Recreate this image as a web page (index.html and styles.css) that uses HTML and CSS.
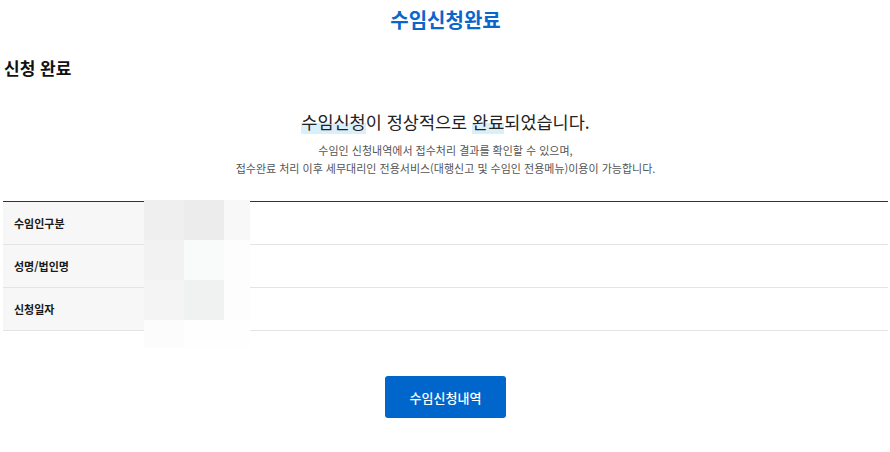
FILE: index.html
```html
<!DOCTYPE html>
<html lang="ko">
<head>
    <meta charset="UTF-8">
    <meta name="viewport" content="width=device-width, initial-scale=1.0">
    <title>수임신청완료</title>
    <link rel="stylesheet" href="styles.css">
</head>
<body>
    <div class="page">
        <h1 class="page-title">수임신청완료</h1>
        <h2 class="section-title">신청 완료</h2>

        <p class="done-msg"><span class="mark">수임신청</span>이 정상적으로 <span class="mark">완료</span>되었습니다.</p>
        <p class="done-sub">
            수임인 신청내역에서 접수처리 결과를 확인할 수 있으며,<br>
            접수완료 처리 이후 세무대리인 전용서비스(대행신고 및 수임인 전용메뉴)이용이 가능합니다.
        </p>

        <div class="info-wrap">
            <table class="info-table">
                <tr>
                    <th>수임인구분</th>
                    <td></td>
                </tr>
                <tr>
                    <th>성명/법인명</th>
                    <td></td>
                </tr>
                <tr>
                    <th>신청일자</th>
                    <td></td>
                </tr>
            </table>
            <!-- masked values -->
            <div class="mosaic">
                <i class="m1"></i><i class="m2"></i><i class="m3"></i>
                <i class="m4"></i><i class="m5"></i><i class="m6"></i>
                <i class="m7"></i><i class="m8"></i><i class="m9"></i>
                <i class="m10"></i><i class="m11"></i><i class="m12"></i>
            </div>
        </div>

        <div class="btn-area">
            <button class="btn-primary">수임신청내역</button>
        </div>
    </div>
</body>
</html>
```

FILE: styles.css
```css
html, body {
    margin: 0;
    background: #fff;
}
body {
    font-family: "Noto Sans CJK KR", "Noto Sans", sans-serif;
    color: #111;
}
.page {
    padding: 0 2px 0 3px;
}
.page-title {
    margin: 0;
    padding-top: 6px;
    font-size: 20px;
    line-height: 28px;
    font-weight: 700;
    color: #0b66cc;
    text-align: center;
}
.section-title {
    margin: 22px 0 0 1px;
    font-size: 17px;
    line-height: 24px;
    font-weight: 700;
    color: #111;
}
.done-msg {
    margin: 30px 0 0;
    font-size: 17.5px;
    line-height: 24px;
    text-align: center;
    color: #222;
}
.mark {
    background: linear-gradient(to bottom, transparent 55%, #d9f0fb 55%);
}
.done-sub {
    margin: 7px 0 0;
    font-size: 11px;
    line-height: 18px;
    text-align: center;
    color: #555;
}
.info-wrap {
    position: relative;
    margin-top: 24px;
}
.info-table {
    width: 100%;
    border-collapse: collapse;
    border-top: 1px solid #333340;
}
.info-table th,
.info-table td {
    height: 42px;
    padding: 0;
    border-bottom: 1px solid #e4e4e4;
}
.info-table th {
    width: 141px;
    padding-left: 11px;
    box-sizing: border-box;
    background: #f7f7f7;
    text-align: left;
    font-size: 11px;
    font-weight: 700;
    color: #1a1a1a;
}
/* blurred data overlay */
.mosaic {
    position: absolute;
    left: 141px;
    top: -1px;
    display: grid;
    grid-template-columns: 40px 40px 26px;
    grid-template-rows: 40px 40px 40px 28px;
}
.mosaic i { display: block; }
.m1 { background: #efefef; }
.m2 { background: #ececec; }
.m3 { background: #f8f8f8; }
.m4 { background: #f2f2f2; }
.m5 { background: #f9fafa; }
.m6 { background: #fdfdfd; }
.m7 { background: #f4f4f4; }
.m8 { background: #f0f1f1; }
.m9 { background: #fdfdfd; }
.m10 { background: #fcfcfc; }
.m11 { background: #fefefe; }
.m12 { background: #fefefe; }
.btn-area {
    margin-top: 45px;
    text-align: center;
}
.btn-primary {
    width: 121px;
    height: 42px;
    border: 0;
    border-radius: 3px;
    background: #0066cc;
    color: #fff;
    font-family: inherit;
    font-size: 13px;
    font-weight: 500;
    cursor: pointer;
}
```
